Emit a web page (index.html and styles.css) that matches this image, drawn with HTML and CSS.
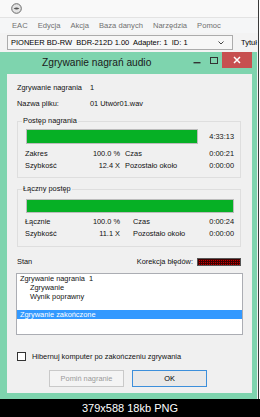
FILE: index.html
```html
<!DOCTYPE html>
<html lang="pl">
<head>
    <meta charset="UTF-8">
    <meta name="viewport" content="width=device-width, initial-scale=1.0">
    <title>Zgrywanie nagrań audio</title>
    <link rel="stylesheet" href="styles.css">
</head>
<body>
    <div class="screen">
        <div class="main">
            <div class="main-title">
                <svg class="app-icon" width="11" height="11" viewBox="0 0 11 11">
                    <circle cx="5.5" cy="5.5" r="4.8" fill="#e4e4e4" stroke="#6a6a6a" stroke-width="1"/>
                    <path d="M2.6 5.6 Q5.5 3.2 8.4 5.6 Q5.5 7.6 2.6 5.6 Z" fill="#555"/>
                </svg>
            </div>
            <div class="menubar">
                <span>EAC</span>
                <span>Edycja</span>
                <span>Akcja</span>
                <span>Baza danych</span>
                <span>Narzędzia</span>
                <span>Pomoc</span>
            </div>
            <div class="toolbar">
                <div class="combo">
                    <span class="combo-text">PIONEER BD-RW  BDR-212D 1.00  Adapter: 1  ID: 1</span>
                    <svg class="chevron" width="6" height="4" viewBox="0 0 6 4">
                        <path d="M0.5 0.5 L3 3 L5.5 0.5" fill="none" stroke="#444" stroke-width="1"/>
                    </svg>
                </div>
                <span class="tb-label">Tytuł</span>
            </div>
        </div>

        <div class="middle">
            <div class="dialog">
                <div class="dlg-title">
                    <span class="dlg-caption">Zgrywanie nagrań audio</span>
                    <span class="wbtn">
                        <svg width="8" height="8" viewBox="0 0 8 8"><rect x="0.5" y="6" width="7" height="1.4" fill="#333"/></svg>
                    </span>
                    <span class="wbtn">
                        <svg width="8" height="8" viewBox="0 0 8 8"><rect x="0.5" y="1.5" width="7" height="6" fill="none" stroke="#333" stroke-width="1"/></svg>
                    </span>
                    <span class="wbtn close">
                        <svg width="8" height="8" viewBox="0 0 8 8"><path d="M1 1 L7 7 M7 1 L1 7" stroke="#fff" stroke-width="1.5"/></svg>
                    </span>
                </div>

                <div class="dlg-body">
                    <div class="info">
                        <span>Zgrywanie nagrania</span><span>1</span>
                        <span>Nazwa pliku:</span><span>01 Utwór01.wav</span>
                    </div>

                    <fieldset class="group g1">
                        <legend>Postęp nagrania</legend>
                        <div class="bar-row">
                            <div class="bar short"><div class="fill" style="width: 100%"></div></div>
                            <span class="bar-time">4:33:13</span>
                        </div>
                        <div class="stats">
                            <span>Zakres</span><span class="num">100.0 %</span><span class="lbl2">Czas</span><span class="num">0:00:21</span>
                            <span>Szybkość</span><span class="num">12.4 X</span><span class="lbl2">Pozostało około</span><span class="num">0:00:00</span>
                        </div>
                    </fieldset>

                    <fieldset class="group g2">
                        <legend>Łączny postęp</legend>
                        <div class="bar-row">
                            <div class="bar full"><div class="fill" style="width: 100%"></div></div>
                        </div>
                        <div class="stats">
                            <span>Łącznie</span><span class="num">100.0 %</span><span class="lbl2">Czas</span><span class="num">0:00:24</span>
                            <span>Szybkość</span><span class="num">11.1 X</span><span class="lbl2">Pozostało około</span><span class="num">0:00:00</span>
                        </div>
                    </fieldset>

                    <div class="status-row">
                        <span class="status-label">Stan</span>
                        <span>Korekcja błędów:</span>
                        <span class="led"></span>
                    </div>

                    <div class="log">
                        <div class="log-line">Zgrywanie nagrania&nbsp; 1</div>
                        <div class="log-line sub">Zgrywanie</div>
                        <div class="log-line sub">Wynik poprawny</div>
                        <div class="log-line">&nbsp;</div>
                        <div class="log-line selected">Zgrywanie zakończone</div>
                    </div>

                    <label class="check-row">
                        <span class="checkbox"></span>
                        <span>Hibernuj komputer po zakończeniu zgrywania</span>
                    </label>

                    <div class="buttons">
                        <button class="btn" disabled>Pomiń nagranie</button>
                        <button class="btn default">OK</button>
                    </div>
                </div>
            </div>
            <div class="edge"></div>
        </div>

        <div class="caption">379x588 18kb PNG</div>
    </div>
</body>
</html>
```

FILE: styles.css
```css
body {
    margin: 0;
    background-color: #fff;
    font-family: "Liberation Sans", Arial, sans-serif;
}
.screen {
    width: 260px;
    height: 417px;
    overflow: hidden;
    display: flex;
    flex-direction: column;
}

/* main EAC window */
.main {
    height: 52px;
    margin-right: 1px;
    border-right: 1px solid #3a3a3a;
    background-color: #f5f6f7;
    display: flex;
    flex-direction: column;
}
.main-title {
    height: 17px;
    border-bottom: 1px solid #e3e3e3;
    background-color: #f9f9f9;
    display: flex;
    align-items: center;
    padding-left: 11px;
}
.menubar {
    height: 15px;
    display: flex;
    align-items: center;
    gap: 10px;
    padding-left: 12px;
    font-size: 7.6px;
    color: #707070;
}
.toolbar {
    height: 19px;
    display: flex;
    align-items: center;
    padding-left: 7px;
    background-color: #f3f3f3;
}
.combo {
    width: 221px;
    height: 13px;
    border: 1px solid #acacac;
    background-color: #f7f7f7;
    display: flex;
    align-items: center;
    padding-left: 3px;
    box-sizing: content-box;
}
.combo-text {
    flex: 1;
    font-size: 7.5px;
    color: #000;
    white-space: pre;
}
.chevron {
    margin-right: 8px;
}
.tb-label {
    margin-left: 8px;
    font-size: 7.5px;
    color: #000;
    white-space: nowrap;
}

/* dialog */
.middle {
    height: 347px;
    display: flex;
}
.dialog {
    width: 245px;
    padding: 0 5px 6px 7px;
    background-color: #7ed4ae;
    display: flex;
    flex-direction: column;
}
.edge {
    flex: 1;
    background: linear-gradient(90deg, #f0f0f0 1px, #3a3a3a 1px, #3a3a3a 2px, #fff 2px);
}
.dlg-title {
    height: 22px;
    display: flex;
    align-items: flex-start;
}
.dlg-caption {
    flex: 1;
    padding-left: 35px;
    line-height: 22px;
    font-size: 10.2px;
    color: #1a1a1a;
    white-space: nowrap;
}
.wbtn {
    width: 17px;
    height: 16px;
    display: flex;
    align-items: center;
    justify-content: center;
}
.wbtn.close {
    width: 30px;
    background-color: #c75050;
}
.dlg-body {
    height: 319px;
    background-color: #f0f0f0;
    padding: 8px 11px 0 10px;
    box-sizing: border-box;
    font-size: 7.4px;
    color: #111;
}
.info {
    display: grid;
    grid-template-columns: 73px 1fr;
    grid-auto-rows: 12px;
    row-gap: 4px;
    line-height: 12px;
}
.group {
    margin: 6px 0 0 0;
    padding: 3px 6px 5px 7px;
    border: 1px solid #dedede;
    min-width: 0;
}
.group legend {
    padding: 0 1px;
    margin-left: -3px;
    line-height: 10px;
    font-size: 7.4px;
}
.g2 {
    padding-top: 5px;
    padding-bottom: 6px;
}
.bar-row {
    display: flex;
    align-items: center;
    padding-left: 1px;
}
.bar {
    height: 15px;
    border: 1px solid #bcbcbc;
    background-color: #e6e6e6;
    box-sizing: border-box;
}
.bar.short {
    width: 172px;
}
.bar.full {
    flex: 1;
    height: 14px;
}
.fill {
    height: 100%;
    background-color: #06b025;
}
.bar-time {
    flex: 1;
    text-align: right;
}
.stats {
    display: grid;
    grid-template-columns: 52px 43px 1fr auto;
    grid-auto-rows: 12px;
    line-height: 12px;
    margin-top: 4px;
    white-space: nowrap;
}
.g2 .stats {
    margin-top: 3px;
}
.stats .num {
    text-align: right;
}
.lbl2 {
    padding-left: 5px;
}
.g2 .lbl2 {
    padding-left: 13px;
}
.status-row {
    margin-top: 9px;
    height: 12px;
    display: flex;
    align-items: center;
    line-height: 12px;
}
.status-label {
    flex: 1;
}
.led {
    width: 44px;
    height: 8px;
    margin-left: 4px;
    box-sizing: border-box;
    border: 1px solid #555;
    background-color: #c40000;
    background-image: linear-gradient(90deg, #400000 1px, transparent 1px), linear-gradient(#400000 1px, transparent 1px);
    background-size: 2px 2px;
}
.log {
    margin: 5px -2px 0 -1px;
    height: 62px;
    box-sizing: border-box;
    border: 1px solid #abadb3;
    background-color: #fff;
    line-height: 9px;
}
.log-line {
    height: 9px;
    padding-left: 3px;
    white-space: nowrap;
}
.log-line.sub {
    padding-left: 13px;
}
.log-line.selected {
    background-color: #3399ff;
    color: #fff;
}
.check-row {
    margin-top: 15px;
    height: 12px;
    display: flex;
    align-items: center;
    gap: 6px;
    white-space: nowrap;
}
.checkbox {
    width: 9px;
    height: 9px;
    box-sizing: border-box;
    border: 1px solid #333;
    background-color: #fff;
}
.buttons {
    margin-top: 8px;
    display: flex;
    justify-content: center;
    gap: 8px;
    padding-right: 2px;
}
.btn {
    width: 75px;
    height: 17px;
    padding: 0;
    font-family: "Liberation Sans", Arial, sans-serif;
    font-size: 7.4px;
    color: #000;
    border: 1px solid #adadad;
    border-radius: 0;
    background-color: #e9e9e9;
}
.btn:disabled {
    color: #9a9a9a;
    border-color: #c9c9c9;
    background-color: #f4f4f4;
}
.btn.default {
    border-color: #3c8fdb;
}

.caption {
    flex: 1;
    background-color: #000;
    color: #fff;
    font-size: 11px;
    line-height: 18px;
    text-align: center;
}
```
